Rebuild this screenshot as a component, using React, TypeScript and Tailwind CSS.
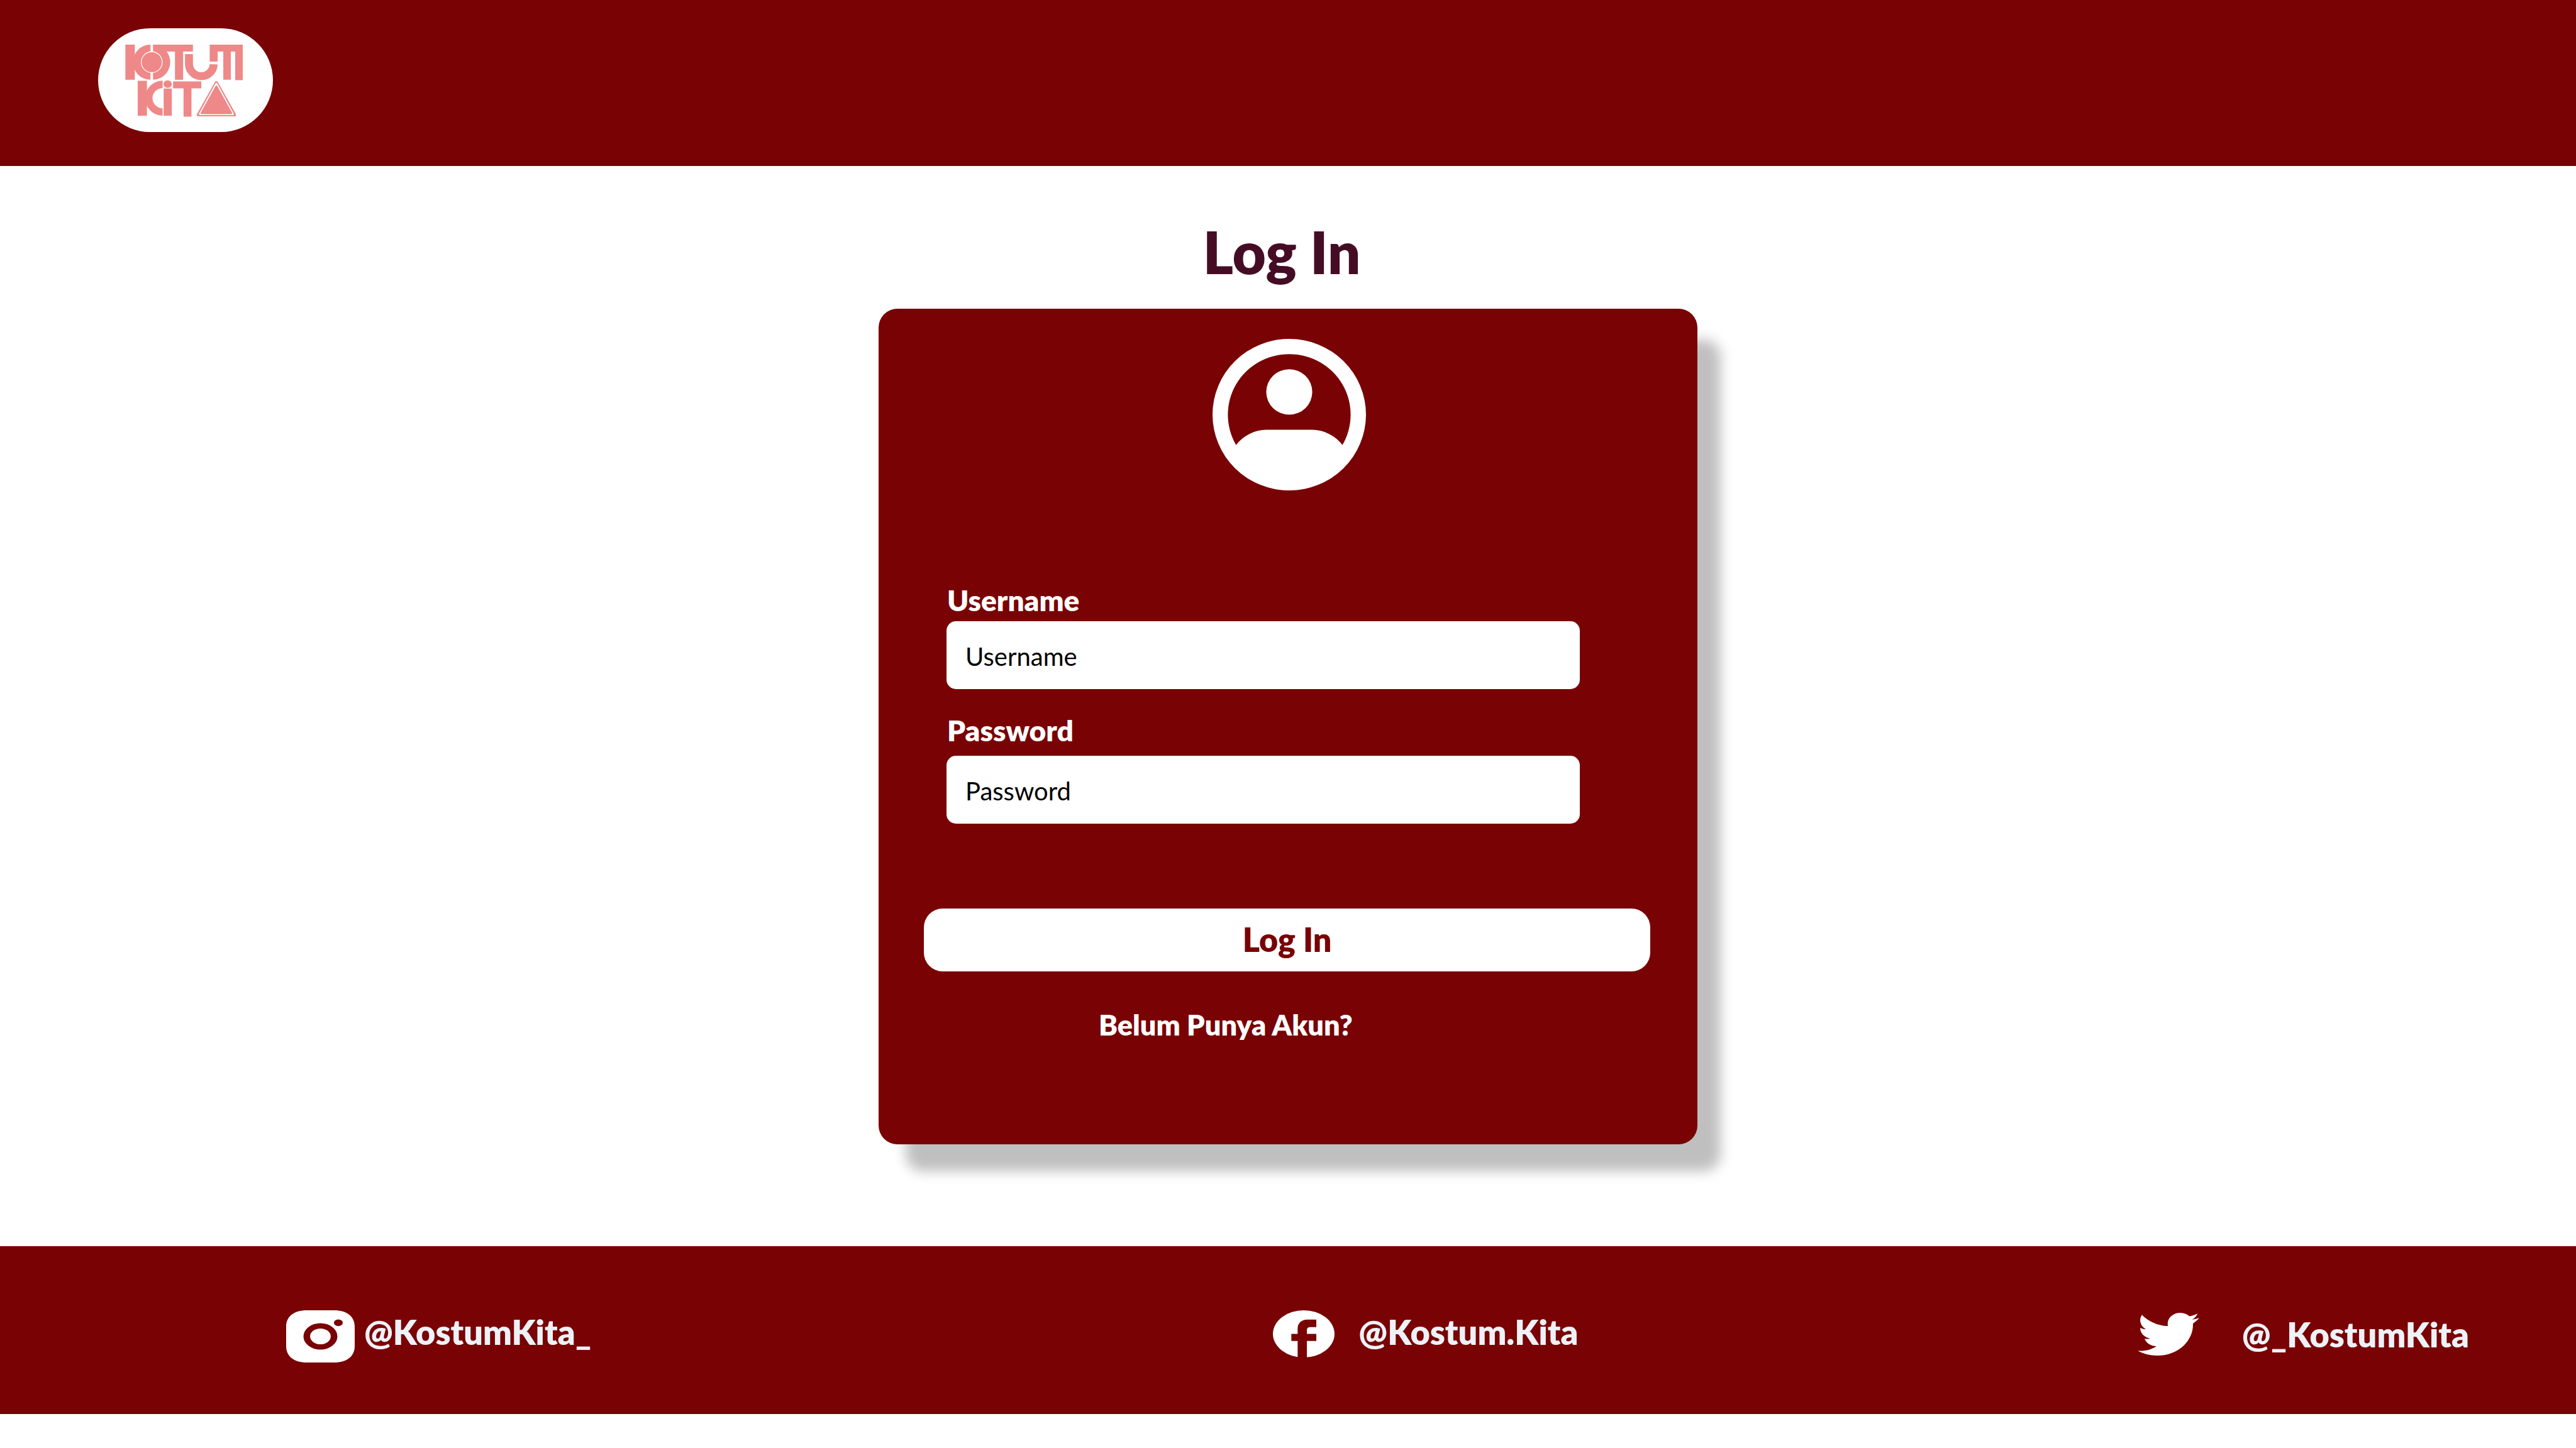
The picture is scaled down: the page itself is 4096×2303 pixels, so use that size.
import type { ReactNode } from 'react';

function Logo() {
  return (
    <svg viewBox="78 75 833 496" className="h-full w-full" fill="#ef8888" role="img" aria-label="Kostum Kita">
      <rect x="207" y="153" width="45" height="168" />
      <path d="M327 153A84 84 0 0 0 327 321Z" />
      <path d="M339 153H530V186H404A84 84 0 0 1 339 321Z" />
      <circle cx="333" cy="237" r="52" fill="#fff" />
      <circle cx="333" cy="237" r="48" />
      <rect x="444" y="180" width="39" height="141" />
      <path d="M511 198V243A59 59 0 0 0 629 247" fill="none" stroke="#ef8888" strokeWidth="38" />
      <path d="M610 153H768V323H732V186H711V321H675V186H648V234H610Z" />
      <rect x="266" y="326" width="44" height="167" />
      <path d="M385 343A66 66 0 0 0 385 475" fill="none" stroke="#ef8888" strokeWidth="35" />
      <ellipse cx="409" cy="342" rx="20" ry="18" />
      <rect x="390" y="363" width="39" height="130" />
      <path d="M435 329H570V362H523V497H485V362H435Z" />
      <g strokeLinejoin="round">
        <path d="M642 334L729 489H555Z" stroke="#ef8888" strokeWidth="14" />
        <path d="M642 340L721 485H563Z" fill="#fff" stroke="#fff" strokeWidth="9" />
        <path d="M642 353L713 481H571Z" stroke="#ef8888" strokeWidth="9" />
      </g>
    </svg>
  );
}

function Avatar() {
  return (
    <svg viewBox="2 2 20 20" preserveAspectRatio="none" className="h-[241px] w-[244px]" fill="#fff" aria-hidden="true">
      <path
        fillRule="evenodd"
        d="M12 2a10 10 0 1 0 0 20a10 10 0 0 0 0-20ZM5.07 16A8 8 0 1 1 18.93 16A5 5 0 0 0 15 14H9A5 5 0 0 0 5.07 16Z"
      />
      <circle cx="12" cy="9" r="3" />
    </svg>
  );
}

function InstagramIcon() {
  return (
    <svg viewBox="0 0 109 83" className="h-[83px] w-[109px] shrink-0" fill="#fff" aria-hidden="true">
      <path
        fillRule="evenodd"
        d="M33 0H76C97 0 109 10 109 26V57C109 73 97 83 76 83H33C12 83 0 73 0 57V26C0 10 12 0 33 0ZM54.5 20.5A27 21 0 1 0 54.5 62.5A27 21 0 1 0 54.5 20.5ZM83 14.5A7 5.2 0 1 0 83 25A7 5.2 0 1 0 83 14.5Z"
      />
      <ellipse cx="54.5" cy="41.5" rx="16.4" ry="12.6" />
    </svg>
  );
}

function FacebookIcon() {
  return (
    <svg viewBox="0 0 274 228" preserveAspectRatio="none" className="h-[75px] w-[98px] shrink-0" aria-hidden="true">
      <ellipse cx="137" cy="114" rx="137" ry="114" fill="#fff" />
      <path
        d="M110 228V148H82V114H110V88C110 62 128 45 153 45H193V81H165C157 81 151 86 151 94V114H193V148H151V228Z"
        fill="#790204"
      />
    </svg>
  );
}

function TwitterIcon() {
  return (
    <svg viewBox="0 48 512 416" preserveAspectRatio="none" className="h-[68px] w-[98px] shrink-0" fill="#fff" aria-hidden="true">
      <path d="M459.37 151.716c.325 4.548.325 9.097.325 13.645 0 138.72-105.583 298.558-298.558 298.558-59.452 0-114.68-17.219-161.137-47.106 8.447.974 16.568 1.299 25.34 1.299 49.055 0 94.213-16.568 130.274-44.832-46.132-.975-84.792-31.188-98.112-72.772 6.498.974 12.995 1.624 19.818 1.624 9.421 0 18.843-1.3 27.614-3.573-48.081-9.747-84.143-51.98-84.143-102.985v-1.299c13.969 7.797 30.214 12.67 47.431 13.319-28.264-18.843-46.781-51.005-46.781-87.391 0-19.492 5.197-37.36 14.294-52.954 51.655 63.675 129.3 105.258 216.365 109.807-1.624-7.797-2.599-15.918-2.599-24.04 0-57.828 46.782-104.934 104.934-104.934 30.213 0 57.502 12.67 76.67 33.137 23.715-4.548 46.456-13.32 66.599-25.34-7.798 24.366-24.366 44.833-46.132 57.827 21.117-2.273 41.584-8.122 60.426-16.243-14.292 20.791-32.161 39.308-52.628 54.253z" />
    </svg>
  );
}

type FieldProps = { id: string; label: string; type: string; labelClass: string };

function Field({ id, label, type, labelClass }: FieldProps) {
  return (
    <div className="flex flex-col">
      <label htmlFor={id} className={`pl-px text-[46px] leading-[56px] font-extrabold text-white ${labelClass}`}>
        {label}
      </label>
      <input
        id={id}
        type={type}
        placeholder={label}
        className="h-[108px] w-full rounded-[15px] bg-white px-[30px] pt-1 text-[40px] text-black placeholder:text-black placeholder:opacity-100"
      />
    </div>
  );
}

function Social({ icon, name, className }: { icon: ReactNode; name: string; className: string }) {
  return (
    <a href="#" className={`flex items-start text-[54px] leading-[66px] font-extrabold whitespace-nowrap text-[#edf2f7] ${className}`}>
      {icon}
      <span className="pt-0.5">{name}</span>
    </a>
  );
}

export default function App() {
  return (
    <div className="flex min-h-screen flex-col bg-white font-['Lato',sans-serif]">
      <header className="flex h-[264px] items-start bg-[#790204] px-[156px] pt-[45px]">
        <a href="#" className="h-[165px] w-[278px] overflow-hidden rounded-full bg-white">
          <Logo />
        </a>
      </header>

      <main className="flex flex-col items-center pt-[81px] pb-[162px]">
        <h1 className="mb-[34px] pr-5 text-[92px] leading-[112px] font-extrabold text-[#450d25]">Log In</h1>

        <form className="flex w-[1302px] max-w-full flex-col rounded-[30px] bg-[#790204] pt-12 pb-[162px] shadow-[40px_46px_20px_-3px_rgba(0,0,0,0.25)]">
          <div className="flex justify-center pl-1">
            <Avatar />
          </div>

          <div className="mt-[147px] flex flex-col gap-[38px] pr-[187px] pl-[108px]">
            <Field id="username" label="Username" type="text" labelClass="mb-[5px]" />
            <Field id="password" label="Password" type="password" labelClass="mb-[12px]" />
          </div>

          <div className="mt-[135px] flex flex-col pr-[75px] pl-[72px]">
            <button type="button" className="h-[100px] rounded-[30px] bg-white pb-0.5 text-[52px] font-extrabold text-[#790204]">
              Log In
            </button>
          </div>

          <a href="#" className="mt-[57px] ml-[350px] self-start text-[45px] leading-[56px] font-extrabold text-white">
            Belum Punya Akun?
          </a>
        </form>
      </main>

      <footer className="grid h-[267px] grid-cols-[1570fr_1375fr_auto] items-start bg-[#790204] pt-[102px] pr-[170px] pl-[455px]">
        <Social icon={<InstagramIcon />} name="@KostumKita_" className="gap-[15px]" />
        <Social icon={<FacebookIcon />} name="@Kostum.Kita" className="gap-[38px]" />
        <Social icon={<TwitterIcon />} name="@_KostumKita" className="gap-[68px] pt-1" />
      </footer>
    </div>
  );
}
